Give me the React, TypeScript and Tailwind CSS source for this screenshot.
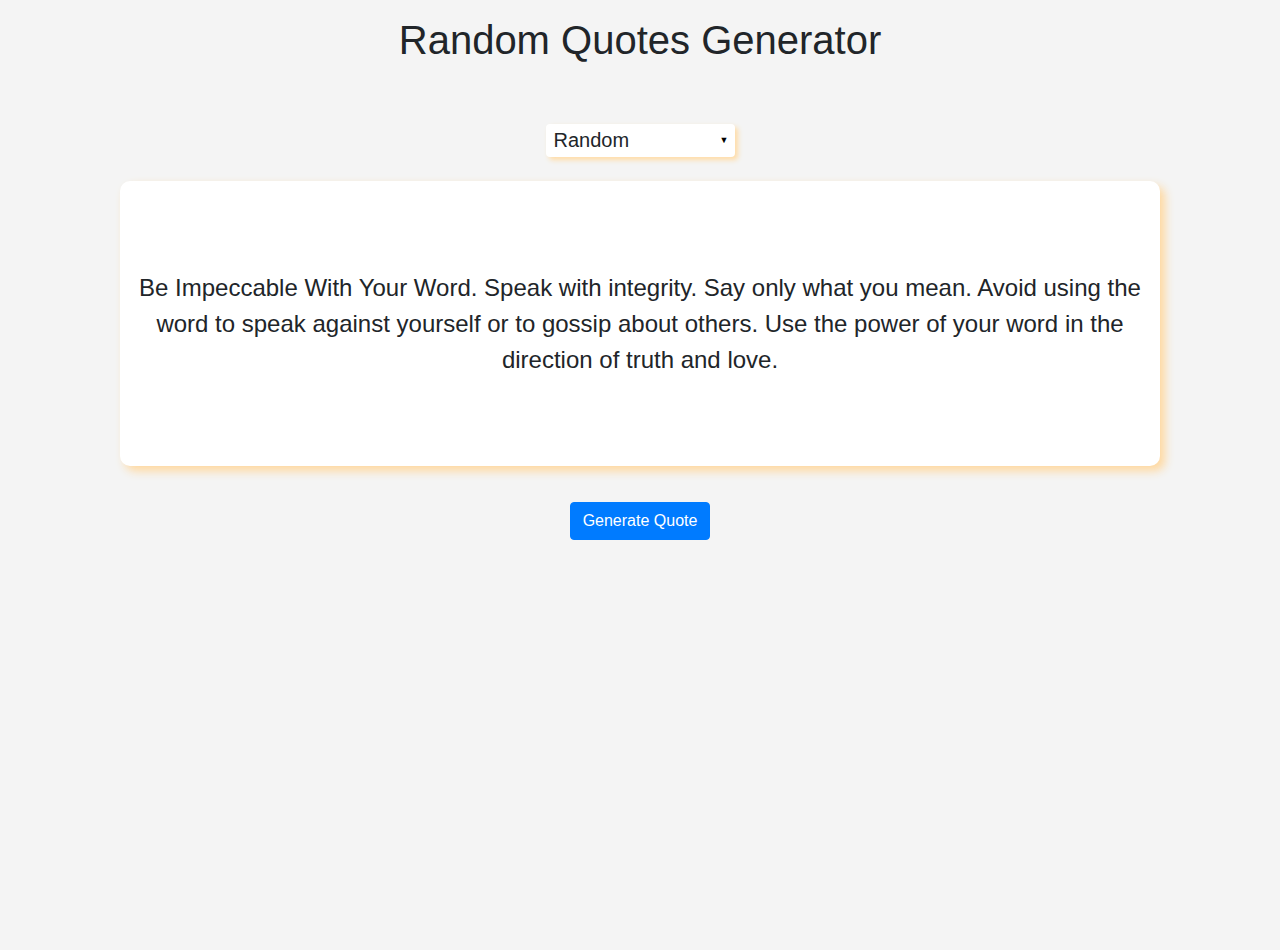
import React from "react";

export default function App() {
  return (
    <div className="min-h-[950px] w-full bg-[#f4f4f4] text-[#212529] [font-family:'Liberation_Sans',Arial,sans-serif]">
      <h1 className="pt-[16px] text-center text-[40px] leading-[48px] font-normal">
        Random Quotes Generator
      </h1>
      <div className="mt-[60px] flex justify-center">
        <div className="relative h-[33px] w-[189px] rounded-[4px] bg-white shadow-[3px_3px_5px_#ffdca6]">
          <select
            defaultValue="Random"
            className="h-full w-full appearance-none rounded-[4px] border-0 bg-transparent pl-[8px] text-[20px] leading-[33px] text-[#212529] outline-none [font-family:'Liberation_Sans',Arial,sans-serif]"
          >
            <option>Random</option>
          </select>
          <span className="pointer-events-none absolute right-[6px] top-[10px] text-[9px] leading-[12px] text-black">
            ▼
          </span>
        </div>
      </div>
      <div className="mx-[120px] mt-[24px] flex h-[285px] items-center justify-center rounded-[10px] bg-white px-[18px] shadow-[5px_5px_10px_#ffd89e]">
        <p className="text-center text-[24px] leading-[36px] text-[#212529]">
          Be Impeccable With Your Word. Speak with integrity. Say only what you mean. Avoid using the word to speak against yourself or to gossip about others. Use the power of your word in the direction of truth and love.
        </p>
      </div>
      <div className="mt-[36px] flex justify-center">
        <button className="rounded-[4px] border border-[#007bff] bg-[#007bff] px-[12px] py-[6px] text-[16px] leading-[24px] text-white">
          Generate Quote
        </button>
      </div>
    </div>
  );
}
